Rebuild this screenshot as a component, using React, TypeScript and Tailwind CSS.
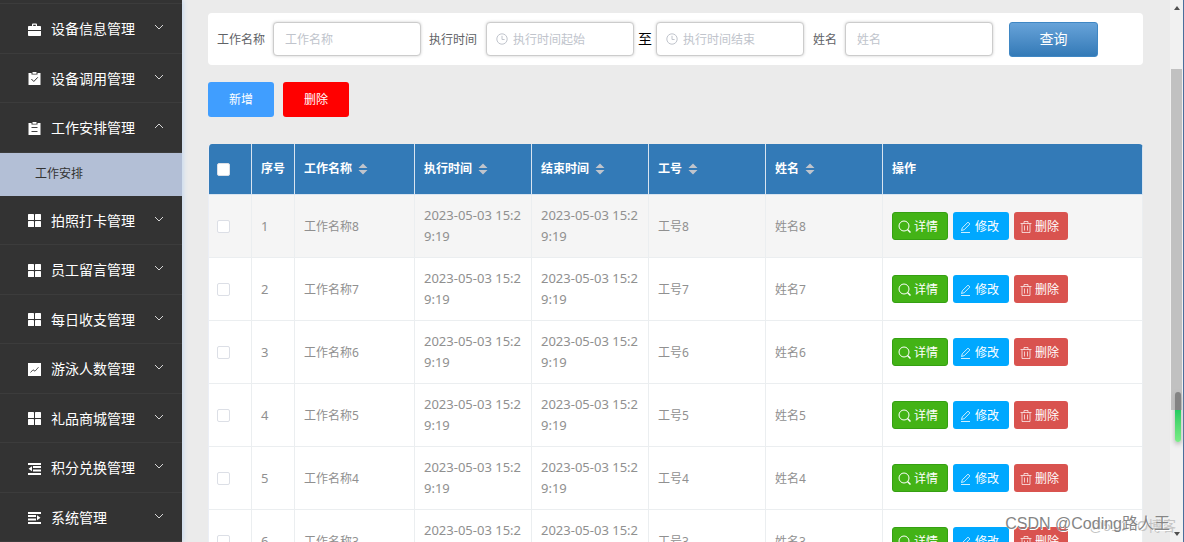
import type { ReactNode } from "react";

type IconName = "suitcase" | "claim" | "order" | "menu" | "marketing" | "fold" | "unfold";

interface MenuItem {
  title: string;
  icon: IconName;
  children?: string[];
}

const MENU: MenuItem[] = [
  { title: "设备信息管理", icon: "suitcase" },
  { title: "设备调用管理", icon: "claim" },
  { title: "工作安排管理", icon: "order", children: ["工作安排"] },
  { title: "拍照打卡管理", icon: "menu" },
  { title: "员工留言管理", icon: "menu" },
  { title: "每日收支管理", icon: "menu" },
  { title: "游泳人数管理", icon: "marketing" },
  { title: "礼品商城管理", icon: "menu" },
  { title: "积分兑换管理", icon: "fold" },
  { title: "系统管理", icon: "unfold" },
];

const ROWS = [8, 7, 6, 5, 4, 3].map((n, i) => ({
  index: i + 1,
  name: `工作名称${n}`,
  start: "2023-05-03 15:29:19",
  end: "2023-05-03 15:29:19",
  jobNo: `工号${n}`,
  person: `姓名${n}`,
}));

const COLUMNS = [
  { label: "工作名称", sortable: true },
  { label: "执行时间", sortable: true },
  { label: "结束时间", sortable: true },
  { label: "工号", sortable: true },
  { label: "姓名", sortable: true },
  { label: "操作", sortable: false },
];

const ICONS: Record<IconName, ReactNode> = {
  suitcase: (
    <>
      <path d="M4 3V1.6Q4 .6 5 .6h3q1 0 1 1V3h3.2q.8 0 .8.8V7H0V3.800Q0 3 .8 3zM5.200 3h2.600V1.800H5.200z" />
      <path d="M0 8h13v4.200q0 .8-.8.8H.8q-.8 0-.8-.8z" />
    </>
  ),
  claim: (
    <>
      <path d="M.5 1H3.500v1.500h6V1h3v12H.5z" />
      <path d="M4.500 0h4v1.800h-4z" />
      <path d="M3.400 7 5.800 9.500 9.800 5.300" fill="none" stroke="#333" />
    </>
  ),
  order: (
    <>
      <path d="M.5 1H3.500v1.500h6V1h3v12H.5z" />
      <path d="M4.500 0h4v1.800h-4z" />
      <path d="M3.500 5.500h6M3.500 9.500h6" fill="none" stroke="#444" />
    </>
  ),
  menu: (
    <>
      <rect width="6" height="6" rx=".6" />
      <rect x="7" width="6" height="6" rx=".6" />
      <rect y="7" width="6" height="6" rx=".6" />
      <rect x="7" y="7" width="6" height="6" rx=".6" />
    </>
  ),
  marketing: (
    <>
      <path d="M0 0h13v13H0z" />
      <path d="M2.500 9.500 5 6.800l2 1.400 3.500-4" fill="none" stroke="#555" />
    </>
  ),
  fold: <path d="M0 1h13v2H0zM5 4h8v2H5zM5 7.500h8v2H5zM0 11h13v2H0zM.5 6.800 4 4.300v4.900z" />,
  unfold: <path d="M0 1h13v2H0zM0 4h8v2H0zM0 7.500h8v2H0zM0 11h13v2H0zM12.500 6.800 9 4.300v4.900z" />,
};

function MenuIcon({ name }: { name: IconName }) {
  return (
    <svg viewBox="0 0 13 13" className="size-[13px] shrink-0 fill-white">
      {ICONS[name]}
    </svg>
  );
}

function Chevron({ open }: { open: boolean }) {
  return (
    <svg viewBox="0 0 10 6" className="mb-1 ml-auto h-[6px] w-[10px] fill-none stroke-[#d8d8d8]">
      <path d={open ? "M1 5 5 1l4 4" : "M1 1l4 4 4-4"} />
    </svg>
  );
}

function Sidebar() {
  return (
    <nav className="z-10 flex h-full w-[182px] shrink-0 flex-col bg-[#333] pt-[3px] shadow-[1px_0_5px_#c3d8f0]">
      <ul className="flex flex-1 flex-col border-t border-[#3c3c3c]">
        {MENU.map((item) => (
          <li key={item.title} className={item.children ? "flex flex-[1_1_43px] flex-col" : "flex flex-[1_1_0px] flex-col"}>
            <button
              type="button"
              className="flex min-h-[49px] w-full flex-1 items-center border-b border-[#3c3c3c] pt-[2px] pr-[18px] pl-7 text-sm text-white"
            >
              <MenuIcon name={item.icon} />
              <span className="ml-[10px]">{item.title}</span>
              <Chevron open={Boolean(item.children)} />
            </button>
            {item.children?.map((child) => (
              <a key={child} href="#" className="flex h-[43px] items-center bg-[#b3bfd6] pl-[35px] text-xs text-[#333]">
                {child}
              </a>
            ))}
          </li>
        ))}
      </ul>
    </nav>
  );
}

function ClockIcon() {
  return (
    <svg viewBox="0 0 12 12" className="mr-[5px] size-3 shrink-0 fill-none stroke-[#c0c4cc]">
      <circle cx="6" cy="6" r="5.2" />
      <path d="M6 2.800V6.500h2.600" />
    </svg>
  );
}

function SearchInput({ id, placeholder, clock }: { id: string; placeholder: string; clock?: boolean }) {
  return (
    <div
      className={
        clock
          ? "flex h-[34px] w-[148px] items-center rounded border border-[#ccc] bg-white pl-[9px] shadow-[0_0_3px_#ccc]"
          : "flex h-[34px] w-[148px] items-center rounded border border-[#ccc] bg-white pl-[11px] shadow-[0_0_3px_#ccc]"
      }
    >
      {clock && <ClockIcon />}
      <input
        id={id}
        type="text"
        placeholder={placeholder}
        className="w-full min-w-0 bg-transparent pt-px text-xs text-[#606266] outline-none placeholder:text-[#c0c4cc]"
      />
    </div>
  );
}

function SearchBar() {
  return (
    <form className="flex h-[52px] items-center rounded bg-white px-[9px] text-xs text-[#606266]">
      <label htmlFor="name" className="mr-2 pt-px">工作名称</label>
      <SearchInput id="name" placeholder="工作名称" />
      <label htmlFor="start" className="mr-[9px] ml-2 pt-px">执行时间</label>
      <SearchInput id="start" placeholder="执行时间起始" clock />
      <label htmlFor="end" className="mx-1 text-sm text-black">至</label>
      <SearchInput id="end" placeholder="执行时间结束" clock />
      <label htmlFor="person" className="mr-2 ml-[9px] pt-px">姓名</label>
      <SearchInput id="person" placeholder="姓名" />
      <button
        type="button"
        className="ml-4 h-[35px] w-[89px] rounded-[3px] border border-[#3f87c4] bg-linear-to-b from-[#67a3d9] to-[#337ab7] text-sm text-white"
      >
        查询
      </button>
    </form>
  );
}

function SortCaret() {
  return (
    <svg viewBox="0 0 10 12" className="ml-[6px] h-3 w-[10px] fill-[#c0c4cc]">
      <path d="M5 .5 9.500 5h-9zM5 11.500.5 7h9z" />
    </svg>
  );
}

function Checkbox({ label }: { label: string }) {
  return (
    <input
      type="checkbox"
      aria-label={label}
      className="block size-[13px] appearance-none rounded-[2px] border border-[#dcdfe6] bg-white"
    />
  );
}

function RowActions() {
  return (
    <div className="flex gap-[5px] text-xs text-white">
      <button type="button" className="flex h-7 w-14 items-center gap-[3px] rounded-[3px] border border-[#35a012] bg-[#43b316] pt-px pl-[5px]">
        <svg viewBox="0 0 13 13" className="size-[13px] fill-none stroke-white">
          <circle cx="6" cy="6" r="5" />
          <path d="m9.500 9.500 3 3" strokeWidth="1.5" />
        </svg>
        详情
      </button>
      <button type="button" className="flex h-7 w-14 items-center gap-[3px] rounded-[3px] bg-[#00a8ff] pt-px pl-[7px]">
        <svg viewBox="0 0 12 12" className="size-3 fill-none stroke-white/80">
          <path d="M1.500 9.500 2.300 6.800 8 1.100 9.900 3 4.200 8.700zM1 11.500h9" />
        </svg>
        修改
      </button>
      <button type="button" className="flex h-7 w-[54px] items-center gap-[3px] rounded-[3px] bg-[#d9534f] pt-px pl-[6px]">
        <svg viewBox="0 0 12 12" className="size-3 fill-none stroke-white/70">
          <path d="M.5 2.500h11M4 2.500v-2h4v2M2 2.500v9h8v-9M4.500 4.500v5M7.500 4.500v5" />
        </svg>
        删除
      </button>
    </div>
  );
}

function WorkTable() {
  return (
    <table className="w-full table-fixed border-separate border-spacing-0 overflow-hidden rounded border-l border-[#ebeef5] bg-white text-left text-xs text-[#909090]">
      <colgroup>
        <col className="w-[43px]" />
        <col className="w-[43px]" />
        <col className="w-[120px]" />
        <col className="w-[117px]" />
        <col className="w-[117px]" />
        <col className="w-[117px]" />
        <col className="w-[117px]" />
        <col />
      </colgroup>
      <thead className="bg-[#337ab7] text-white">
        <tr className="h-[51px]">
          <th className="border-r border-b border-[#d8e4f0] pl-2">
            <Checkbox label="全选" />
          </th>
          <th className="border-r border-b border-[#d8e4f0] pl-[9px] font-bold">序号</th>
          {COLUMNS.map((col) => (
            <th key={col.label} className="border-r border-b border-[#d8e4f0] pl-[9px] font-bold">
              <div className="flex items-center">
                {col.label}
                {col.sortable && <SortCaret />}
              </div>
            </th>
          ))}
        </tr>
      </thead>
      <tbody>
        {ROWS.map((row) => (
          <tr
            key={row.index}
            className="h-[63px] first:bg-[#f5f5f5] *:border-r *:border-b *:border-[#ebeef0] *:pl-[9px] *:leading-[21px]"
          >
            <td className="pl-2!">
              <Checkbox label={`选择${row.name}`} />
            </td>
            <td className="text-[13px]">{row.index}</td>
            <td>{row.name}</td>
            <td className="py-[10px] pr-[9px] text-[13px] break-all">{row.start}</td>
            <td className="py-[10px] pr-[9px] text-[13px] break-all">{row.end}</td>
            <td>{row.jobNo}</td>
            <td>{row.person}</td>
            <td>
              <RowActions />
            </td>
          </tr>
        ))}
      </tbody>
    </table>
  );
}

function PageScrollbar() {
  return (
    <div className="relative flex h-full w-[14px] shrink-0 flex-col items-center border-r border-[#4a6f9c] bg-[#f1f1f1]">
      <svg viewBox="0 0 6 4" className="mt-[6px] h-1 w-[6px] shrink-0 fill-[#505050]">
        <path d="M0 4 3 0l3 4z" />
      </svg>
      <div className="mt-[59px] h-[341px] w-[11px] shrink-0 bg-[#c1c1c1]" />
      <svg viewBox="0 0 6 4" className="mt-auto mb-[6px] h-1 w-[6px] shrink-0 fill-[#505050]">
        <path d="M0 0h6L3 4z" />
      </svg>
      <div className="absolute top-[392px] right-[2px] h-[50px] w-[6px] rounded-full bg-linear-to-b from-[#838383] from-36% via-[#25cc62] via-37% to-[#79ed86] shadow-[0_2px_5px_#aaa]" />
    </div>
  );
}

export default function App() {
  return (
    <div className="relative flex h-screen overflow-hidden bg-[#ebebeb] font-['Noto_Sans','Noto_Sans_CJK_SC',sans-serif]">
      <Sidebar />
      <main className="min-w-0 flex-1 pt-[13px] pr-[27px] pl-[26px]">
        <SearchBar />
        <div className="mt-[17px] mb-[27px] flex gap-[9px] text-xs text-white">
          <button type="button" className="h-[35px] w-[66px] rounded-[3px] bg-[#409eff]">新增</button>
          <button type="button" className="h-[35px] w-[66px] rounded-[3px] bg-[#f00]">删除</button>
        </div>
        <WorkTable />
      </main>
      <PageScrollbar />
      <span className="absolute right-2 bottom-2 z-20 font-['Liberation_Sans','Noto_Sans_CJK_SC',sans-serif] text-sm leading-4 text-[#c4c4c4]">
        @51CTO博客
      </span>
      <span className="absolute right-[14px] bottom-2 z-20 font-['Liberation_Sans','Noto_Sans_CJK_SC',sans-serif] text-base leading-5 text-[#858585] [text-shadow:1px_1px_0_#fff]">
        CSDN @Coding路人王
      </span>
    </div>
  );
}
